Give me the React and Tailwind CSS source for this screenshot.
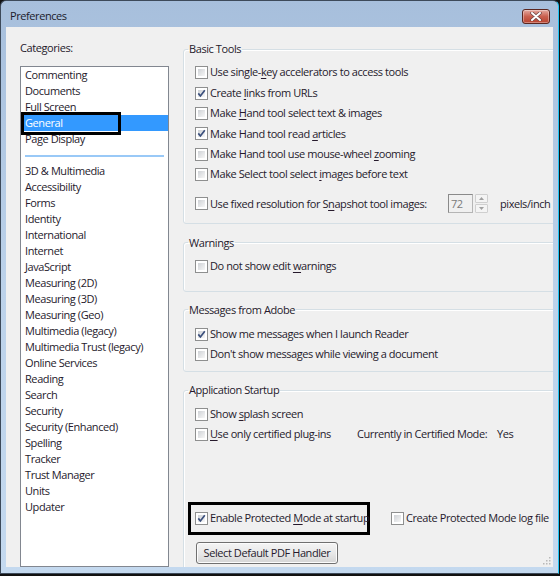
import React from "react";

const U = ({ children }) => (
  <span className="underline underline-offset-[2px] decoration-[1px]">{children}</span>
);

const Check = ({ checked }) => (
  <span className="relative w-[13px] h-[13px] shrink-0 border border-[#8e8f8f] bg-white p-[2px] flex">
    <span className="flex-1 bg-linear-to-br from-[#cfd2d6] to-[#f7f7f7]" />
    {checked && (
      <svg className="absolute left-0 top-0" width="11" height="11" viewBox="0 0 11 11">
        <path d="M2.3 5.4 L4.4 8 L8.8 2.3" fill="none" stroke="#3a4f7c" strokeWidth="1.7" />
      </svg>
    )}
  </span>
);

const Row = ({ checked, children, className = "" }) => (
  <div className={"h-[20.4px] flex items-center ml-[11px] " + className}>
    <Check checked={checked} />
    <span className="ml-[2px] whitespace-nowrap">{children}</span>
  </div>
);

const Group = ({ title, className = "", children }) => (
  <fieldset className={"border border-[#d5dfe5] rounded-[3px] shadow-[inset_1px_1px_0_#ffffff] " + className}>
    <legend className="ml-[4px] px-[1px] leading-[16px] h-[16px]">{title}</legend>
    {children}
  </fieldset>
);

const top = ["Commenting", "Documents", "Full Screen", "General", "Page Display"];
const rest = [
  "3D & Multimedia", "Accessibility", "Forms", "Identity", "International", "Internet",
  "JavaScript", "Measuring (2D)", "Measuring (3D)", "Measuring (Geo)", "Multimedia (legacy)",
  "Multimedia Trust (legacy)", "Online Services", "Reading", "Search", "Security",
  "Security (Enhanced)", "Spelling", "Tracker", "Trust Manager", "Units", "Updater",
];

export default function App() {
  return (
    <div className="w-[560px] h-[576px] bg-[#111] flex items-start font-['Open_Sans',sans-serif] text-[11px] tracking-[-0.42px] text-[#261a2c]">
      <div className="w-[559px] h-[574px] flex flex-col rounded-t-[6px] border-l border-t border-b border-[#3d4a5a] border-r border-r-[#20c4f4] bg-linear-to-b from-[#a7bfdc] via-[#bcd2ea] to-[#c4d9ef]">
        {/* Title bar */}
        <div className="h-[26px] flex items-start justify-between pl-[9px] pr-[8px] shrink-0">
          <span className="mt-[7px] leading-[16px] text-[#1b1b2b]">Preferences</span>
          <div className="mt-[8px] w-[28px] h-[15px] rounded-[3px] border border-[#5b2620] bg-linear-to-b from-[#e3a8a0] via-[#c9604f] to-[#b8412e] flex items-center justify-center shadow-[inset_0_0_0_1px_rgba(255,255,255,0.35)]">
            <svg width="12" height="9" viewBox="0 0 12 9">
              <path d="M2 1 L10 8 M10 1 L2 8" stroke="#6b4444" strokeWidth="3.4" strokeLinecap="round" />
              <path d="M2 1 L10 8 M10 1 L2 8" stroke="#ffffff" strokeWidth="2" strokeLinecap="round" />
            </svg>
          </div>
        </div>

        {/* Body */}
        <div className="flex-1 flex px-[5px] min-h-0">
          <div className="relative flex-1 bg-[#f0f0f0] flex pl-[14px] pt-[13px] overflow-hidden">
            {/* Left column */}
            <div className="w-[149px] shrink-0 flex flex-col">
              <div className="h-[16px] leading-[16px]">Categories:</div>
              <div className="mt-[10px] flex-1 border border-[#828790] bg-white pt-0">
                {top.map((t) =>
                  t === "General" ? (
                    <div key={t} className="relative h-[16px] leading-[16px] pl-[4px] bg-[#3399ff] text-white">
                      {t}
                      <div className="absolute left-0 top-[-3px] w-[100px] h-[23px] border-[3px] border-black" />
                    </div>
                  ) : (
                    <div key={t} className="h-[16px] leading-[16px] pl-[4px]">{t}</div>
                  )
                )}
                <div className="mt-[8px] mb-[6px] mx-[4px] h-[2px] bg-[#99c9f7]" />
                {rest.map((t) => (
                  <div key={t} className="h-[16px] leading-[16px] pl-[4px] whitespace-nowrap">{t}</div>
                ))}
              </div>
            </div>

            {/* Right column */}
            <div className="ml-[14px] mt-[1px] w-[380px] shrink-0 flex flex-col">
              <Group title="Basic Tools" className="pt-[5.5px] pb-[8px]">
                <Row><>Use single-<U>k</U>ey accelerators to access tools</></Row>
                <Row checked><>Create <U>l</U>inks from URLs</></Row>
                <Row><>Make <U>H</U>and tool select text &amp; images</></Row>
                <Row checked><>Make Hand tool read <U>a</U>rticles</></Row>
                <Row><>Make Hand tool use mouse-wheel <U>z</U>ooming</></Row>
                <Row><>Make Select tool select <U>i</U>mages before text</></Row>
                <div className="mt-[8px] h-[22px] flex items-center ml-[11px]">
                  <div className="w-[253px] flex items-center">
                    <Check />
                    <span className="ml-[2px] whitespace-nowrap">Use fixed resolution for S<U>n</U>apshot tool images:</span>
                  </div>
                  <div className="w-[25px] h-[19px] border border-[#b5b5b5] border-l-[#8a8a8a] border-t-[#8a8a8a] bg-[#f0f0f0] text-[#7a7a7a] leading-[17px] pl-[2px]">72</div>
                  <div className="ml-[2px] w-[13px] h-[19px] flex flex-col gap-[1px]">
                    <div className="flex-1 border border-[#cfcfcf] rounded-[1px] bg-[#f4f4f4] flex items-center justify-center">
                      <svg width="5" height="3" viewBox="0 0 5 3"><path d="M0 3 L2.5 0 L5 3Z" fill="#a0a0a0" /></svg>
                    </div>
                    <div className="flex-1 border border-[#cfcfcf] rounded-[1px] bg-[#f4f4f4] flex items-center justify-center">
                      <svg width="5" height="3" viewBox="0 0 5 3"><path d="M0 0 L2.5 3 L5 0Z" fill="#a0a0a0" /></svg>
                    </div>
                  </div>
                  <span className="ml-[12px] whitespace-nowrap">pixels/inch</span>
                </div>
              </Group>

              <Group title="Warnings" className="mt-[11px] pt-[5px] pb-[14.5px]">
                <Row><>Do not show edit <U>w</U>arnings</></Row>
              </Group>

              <Group title="Messages from Adobe" className="mt-[10px] pt-[6.3px] pb-[6px]">
                <Row checked>Show me messages when I launch Reader</Row>
                <Row>Don't show messages while viewing a document</Row>
              </Group>

              <Group title="Application Startup" className="mt-[10.4px] pt-[5.8px] pb-[20px]">
                <Row><>Show <U>s</U>plash screen</></Row>
                <div className="h-[20.4px] flex items-center ml-[11px]">
                  <div className="w-[162px] flex items-center">
                    <Check />
                    <span className="ml-[2px] whitespace-nowrap"><U>U</U>se only certified plug-ins</span>
                  </div>
                  <span className="w-[140px] whitespace-nowrap">Currently in Certified Mode:</span>
                  <span>Yes</span>
                </div>
                <div className="mt-[57.4px] ml-[4px] flex items-center">
                  <div className="w-[182px] h-[33px] border-[3px] border-black flex items-center pl-[4px]">
                    <Check checked />
                    <span className="ml-[2px] whitespace-nowrap">Enable Protected <U>M</U>ode at startup</span>
                  </div>
                  <div className="ml-[21px] flex items-center">
                    <Check />
                    <span className="ml-[2px] whitespace-nowrap">Create Protected Mode log file</span>
                  </div>
                </div>
                <button className="mt-[7px] ml-[12px] w-[142px] h-[22px] border border-[#707070] rounded-[3px] bg-linear-to-b from-[#f4f4f4] via-[#e9e9e9] to-[#d5d5d5] shadow-[inset_0_0_0_1px_#fcfcfc] text-[11px] leading-[18px] text-[#261a2c]">
                  Select Default PDF Handler
                </button>
              </Group>
            </div>

            {/* resize grip */}
            <svg className="absolute right-[2px] bottom-[2px]" width="10" height="10" viewBox="0 0 10 10">
              {[[8, 2], [8, 5], [8, 8], [5, 5], [5, 8], [2, 8]].map(([x, y], i) => (
                <rect key={i} x={x} y={y} width="1.5" height="1.5" fill="#b8b8b8" />
              ))}
            </svg>
          </div>
        </div>
        <div className="h-[6px] shrink-0" />
      </div>
    </div>
  );
}
